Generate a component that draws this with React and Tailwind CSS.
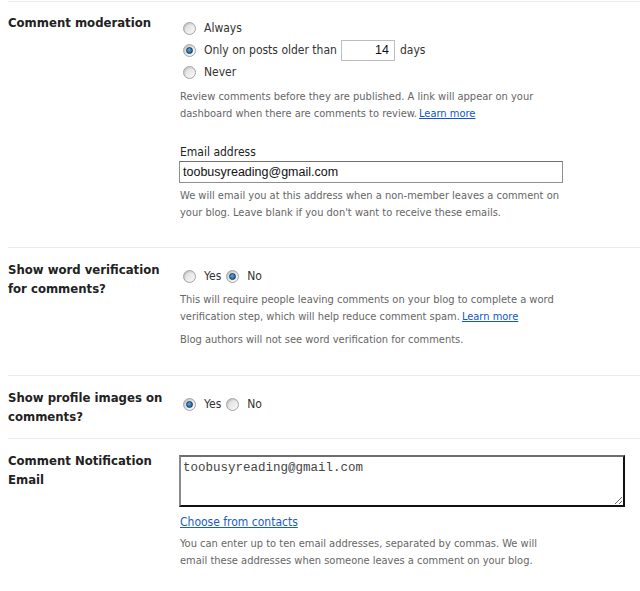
import React from "react";

const tahoma = "font-['DejaVu_Sans_Condensed','DejaVu_Sans',sans-serif] font-stretch-condensed";

function Radio({ checked, label }) {
  return (
    <label className="flex items-center h-[22px]">
      <span className="ml-[3px] mr-[8px] w-[13px] h-[13px] rounded-full border border-[#a4a4a4] bg-gradient-to-br from-[#d9d9d9] to-[#fafafa] flex items-center justify-center shadow-[inset_1px_1px_1px_rgba(0,0,0,0.12)]">
        {checked && (
          <span className="w-[7px] h-[7px] rounded-full bg-[radial-gradient(circle_at_40%_35%,#5fa6de,#0d4f8b)] border border-[#13375b]" />
        )}
      </span>
      <span className="text-[12px] text-[#333]">{label}</span>
    </label>
  );
}

function Row({ label, children, labelPad = "pt-3", bodyPad, pb }) {
  return (
    <div className={`flex border-t border-[#ebebeb] ${pb}`}>
      <div className={`w-[172px] shrink-0 ${labelPad} text-[13px] font-bold leading-[19px] text-[#222]`}>
        {label}
      </div>
      <div className={`flex-1 ${bodyPad}`}>{children}</div>
    </div>
  );
}

function Help({ children, className = "" }) {
  return <p className={`text-[11px] leading-[17px] text-[#666] ${className}`}>{children}</p>;
}

function LearnMore() {
  return (
    <a href="#" className="ml-[2px] text-[#1155cc] underline">
      Learn more
    </a>
  );
}

export default function App() {
  return (
    <div className={`bg-white w-[640px] h-[591px] overflow-hidden pl-2 pt-px ${tahoma}`}>
      <Row label="Comment moderation" labelPad="pt-[11px]" bodyPad="pt-[15px]" pb="pb-[26px]">
        <Radio label="Always" />
        <div className="flex items-center h-[22px]">
          <Radio checked label="Only on posts older than" />
          <input
            readOnly
            value="14"
            className="ml-[4px] w-[54px] h-[21px] border border-[#bdbdbd] text-right pr-[5px] text-[12.5px] font-['Liberation_Sans',Arial,sans-serif] text-[#111] outline-none"
          />
          <span className="ml-[5px] text-[12px] text-[#333]">days</span>
        </div>
        <Radio label="Never" />
        <Help className="mt-[5px] w-[380px]">
          Review comments before they are published. A link will appear on your dashboard when there are
          comments to review.<LearnMore />
        </Help>
        <div className="mt-[22px] text-[12px] leading-[17px] text-[#222]">Email address</div>
        <input
          readOnly
          value="toobusyreading@gmail.com"
          className="block -ml-px w-[384px] h-[22px] border border-[#8f8f8f] border-t-[#707070] px-[3px] text-[12.5px] font-['Liberation_Sans',Arial,sans-serif] text-[#111] outline-none"
        />
        <Help className="mt-[4px] w-[400px]">
          We will email you at this address when a non-member leaves a comment on your blog. Leave blank
          if you don't want to receive these emails.
        </Help>
      </Row>

      <Row
        label={
          <>
            Show word verification
            <br />
            for comments?
          </>
        }
        labelPad="pt-3"
        bodyPad="pt-[17px]"
        pb="pb-[27px]"
      >
        <div className="flex items-center">
          <Radio label="Yes" />
          <span className="w-[2px]" />
          <Radio checked label="No" />
        </div>
        <Help className="mt-[4px] w-[410px]">
          This will require people leaving comments on your blog to complete a word verification step,
          which will help reduce comment spam.<LearnMore />
        </Help>
        <Help className="mt-[6px]">Blog authors will not see word verification for comments.</Help>
      </Row>

      <Row
        label={
          <>
            Show profile images on
            <br />
            comments?
          </>
        }
        labelPad="pt-3"
        bodyPad="pt-[17px]"
        pb="pb-3"
      >
        <div className="flex items-center">
          <Radio checked label="Yes" />
          <span className="w-[2px]" />
          <Radio label="No" />
        </div>
      </Row>

      <Row
        label={
          <>
            Comment Notification
            <br />
            Email
          </>
        }
        labelPad="pt-3"
        bodyPad="pt-[16px]"
        pb="pb-8"
      >
        <textarea
          readOnly
          value="toobusyreading@gmail.com"
          className="-ml-px block w-[446px] h-[52px] border-2 border-t-[#6e6e6e] border-l-[#8a8a8a] border-r-[#111] border-b-[#111] px-[2px] pt-[3px] text-[12.5px] leading-[16px] font-['Liberation_Mono','Courier_New',monospace] text-[#444] outline-none resize"
        />
        <a href="#" className="block mt-[7px] text-[12px] leading-[17px] text-[#1a5ccc] underline">
          Choose from contacts
        </a>
        <Help className="mt-[4px] w-[385px]">
          You can enter up to ten email addresses, separated by commas. We will email these addresses when
          someone leaves a comment on your blog.
        </Help>
      </Row>
    </div>
  );
}
